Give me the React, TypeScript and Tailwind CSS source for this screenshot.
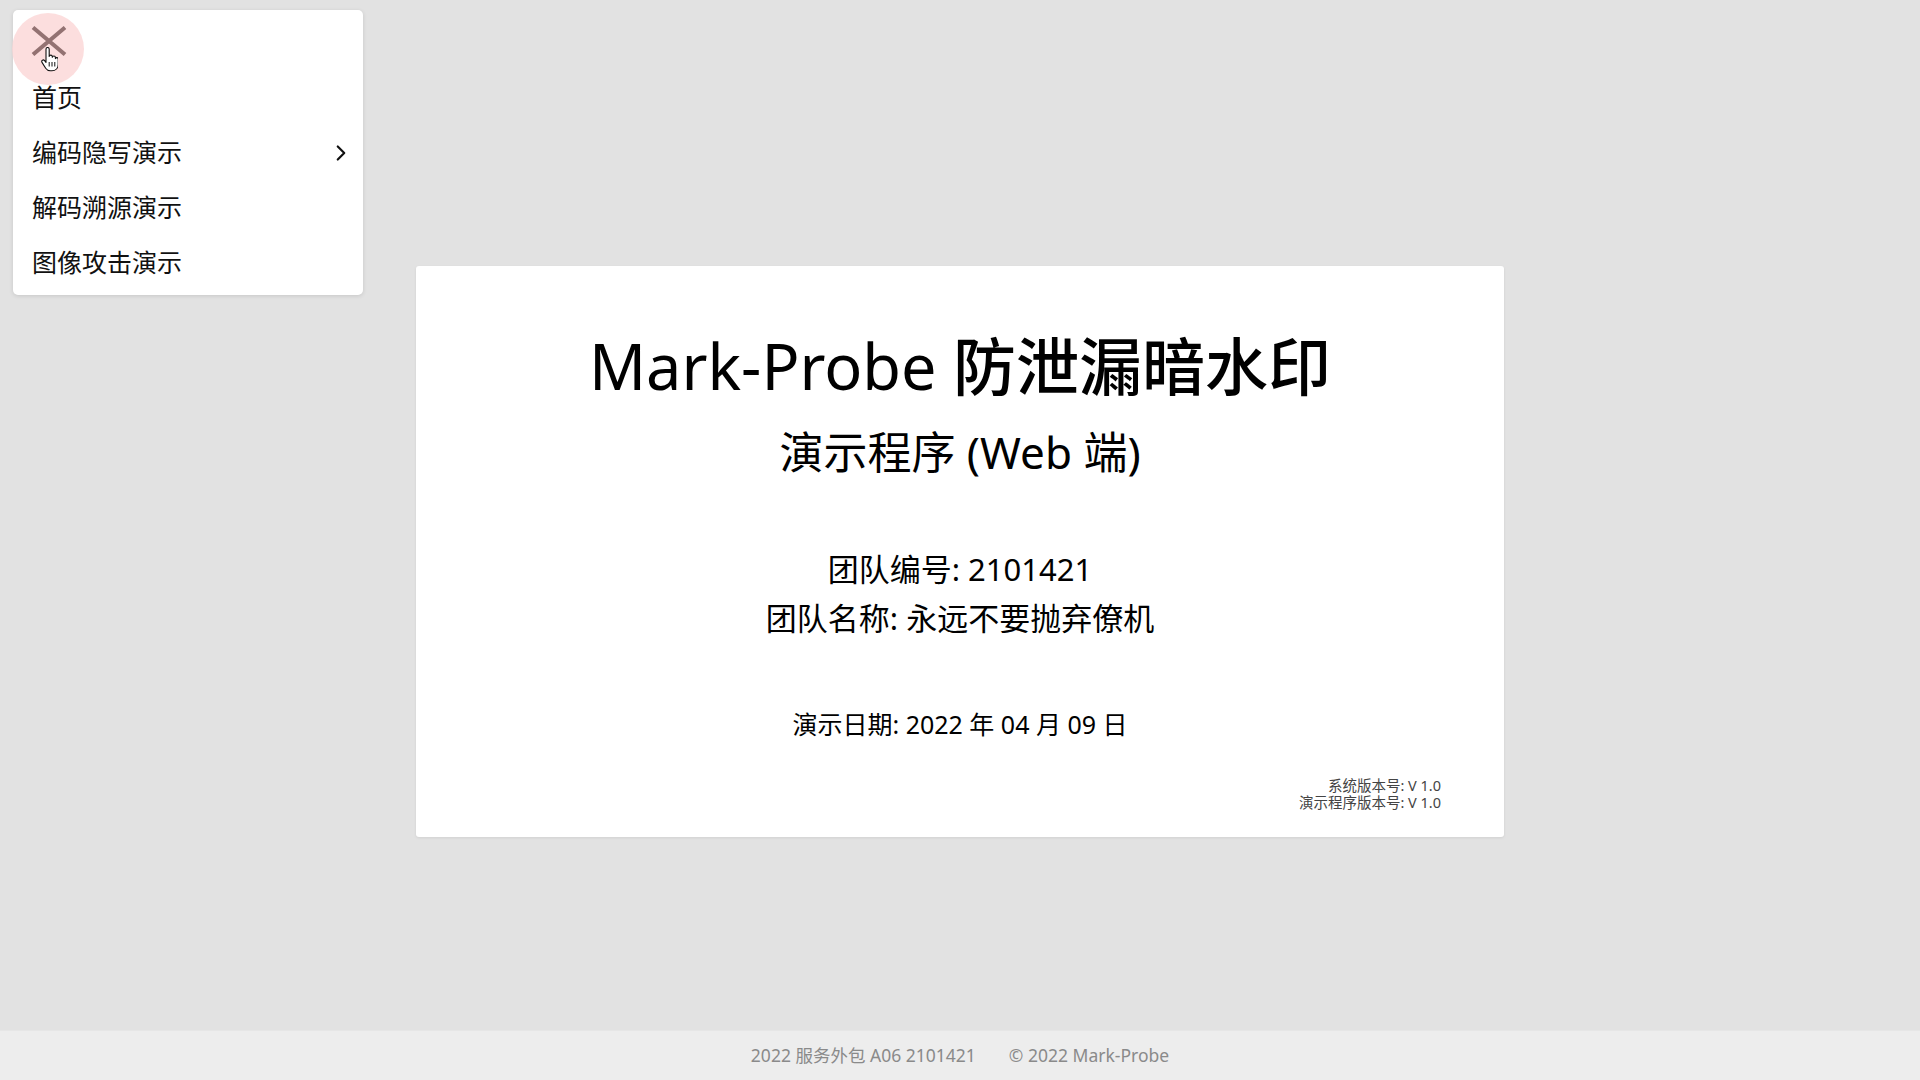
import React from "react";
import { ChevronRight } from "lucide-react";

const menuItems = [
  { label: "首页", sub: false },
  { label: "编码隐写演示", sub: true },
  { label: "解码溯源演示", sub: false },
  { label: "图像攻击演示", sub: false },
];

const font = "font-['Noto_Sans','Noto_Sans_CJK_SC',sans-serif]";

const HandCursor = () => (
  <svg width="17" height="25" viewBox="0 0 17 25" className="absolute left-[28px] top-[37px]">
    <path
      d="M5 2.2c0-1 .7-1.7 1.6-1.7s1.6.7 1.6 1.7v7.3c.2-.9.9-1.4 1.600-1.4.9 0 1.5.7 1.5 1.6v.6c.2-.8.9-1.3 1.6-1.3.9 0 1.5.7 1.5 1.6v1c.2-.6.8-1 1.4-1 .8 0 1.4.7 1.4 1.5v5.3c0 3.7-2.6 6.3-6.3 6.3H9.2c-2 0-3.4-.9-4.5-2.5L1 15.4c-.5-.8-.3-1.8.4-2.2.7-.5 1.6-.3 2.2.4L5 15.4z"
      fill="#fff"
      stroke="#111"
      strokeWidth="1.1"
      strokeLinejoin="round"
    />
    <path d="M8.2 15v4.5M11 15v4.5M13.8 15v4.5" stroke="#111" strokeWidth="1" />
  </svg>
);

const SideMenu = () => (
  <div className="absolute left-[13px] top-[10px] w-[350px] rounded-[5px] bg-white pb-[5px] shadow-[0_1px_4px_rgba(0,0,0,0.12)]">
    <div className="relative h-[60px]">
      <div className="absolute left-[-1px] top-[3px] h-[72px] w-[72px] rounded-full bg-[#fbd6d6]/80" />
      <svg
        width="36"
        height="30"
        viewBox="0 0 36 30"
        className="absolute left-[18px] top-[16px]"
      >
        <path d="M2 1.5 34 28.5M34 1.5 2 28.5" stroke="#937272" strokeWidth="4" />
      </svg>
      <HandCursor />
    </div>
    {menuItems.map((item) => (
      <div
        key={item.label}
        className="flex h-[55px] items-center justify-between pl-[19px] pr-[9px] text-[25px] text-[#111]"
      >
        <span>{item.label}</span>
        {item.sub && <ChevronRight size={26} strokeWidth={2} className="text-[#111]" />}
      </div>
    ))}
  </div>
);

const App = () => {
  return (
    <div className={`${font} relative flex min-h-screen flex-col bg-[#e2e2e2]`}>
      <main className="flex flex-1 justify-center pt-[266px]">
        <div className="flex h-[571px] w-[1088px] flex-col items-center rounded-[3px] bg-white pt-[60px] text-black shadow-[0_1px_3px_rgba(0,0,0,0.08)]">
          <h1 className="text-[63px] font-[450] leading-[80px]">Mark-Probe 防泄漏暗水印</h1>
          <h2 className="mt-[16px] text-[44px] leading-[60px]">演示程序 (Web 端)</h2>
          <div className="mt-[63px] flex flex-col items-center text-[31px] leading-[49px]">
            <p>团队编号: 2101421</p>
            <p>团队名称: 永远不要抛弃僚机</p>
          </div>
          <p className="mt-[65px] text-[25px] leading-[32px]">演示日期: 2022 年 04 月 09 日</p>
          <div className="mt-[37px] flex w-full flex-col items-end pr-[63px] text-[14.5px] leading-[17px] text-[#444]">
            <p>系统版本号: V 1.0</p>
            <p>演示程序版本号: V 1.0</p>
          </div>
        </div>
      </main>
      <footer className="flex h-[50px] items-center justify-center gap-[33px] border-t border-[#e6e6e6] bg-[#ededed] text-[17.5px] text-[#8a8a8a]">
        <span>2022 服务外包 A06 2101421</span>
        <span>© 2022 Mark-Probe</span>
      </footer>
      <SideMenu />
    </div>
  );
};

export default App;
